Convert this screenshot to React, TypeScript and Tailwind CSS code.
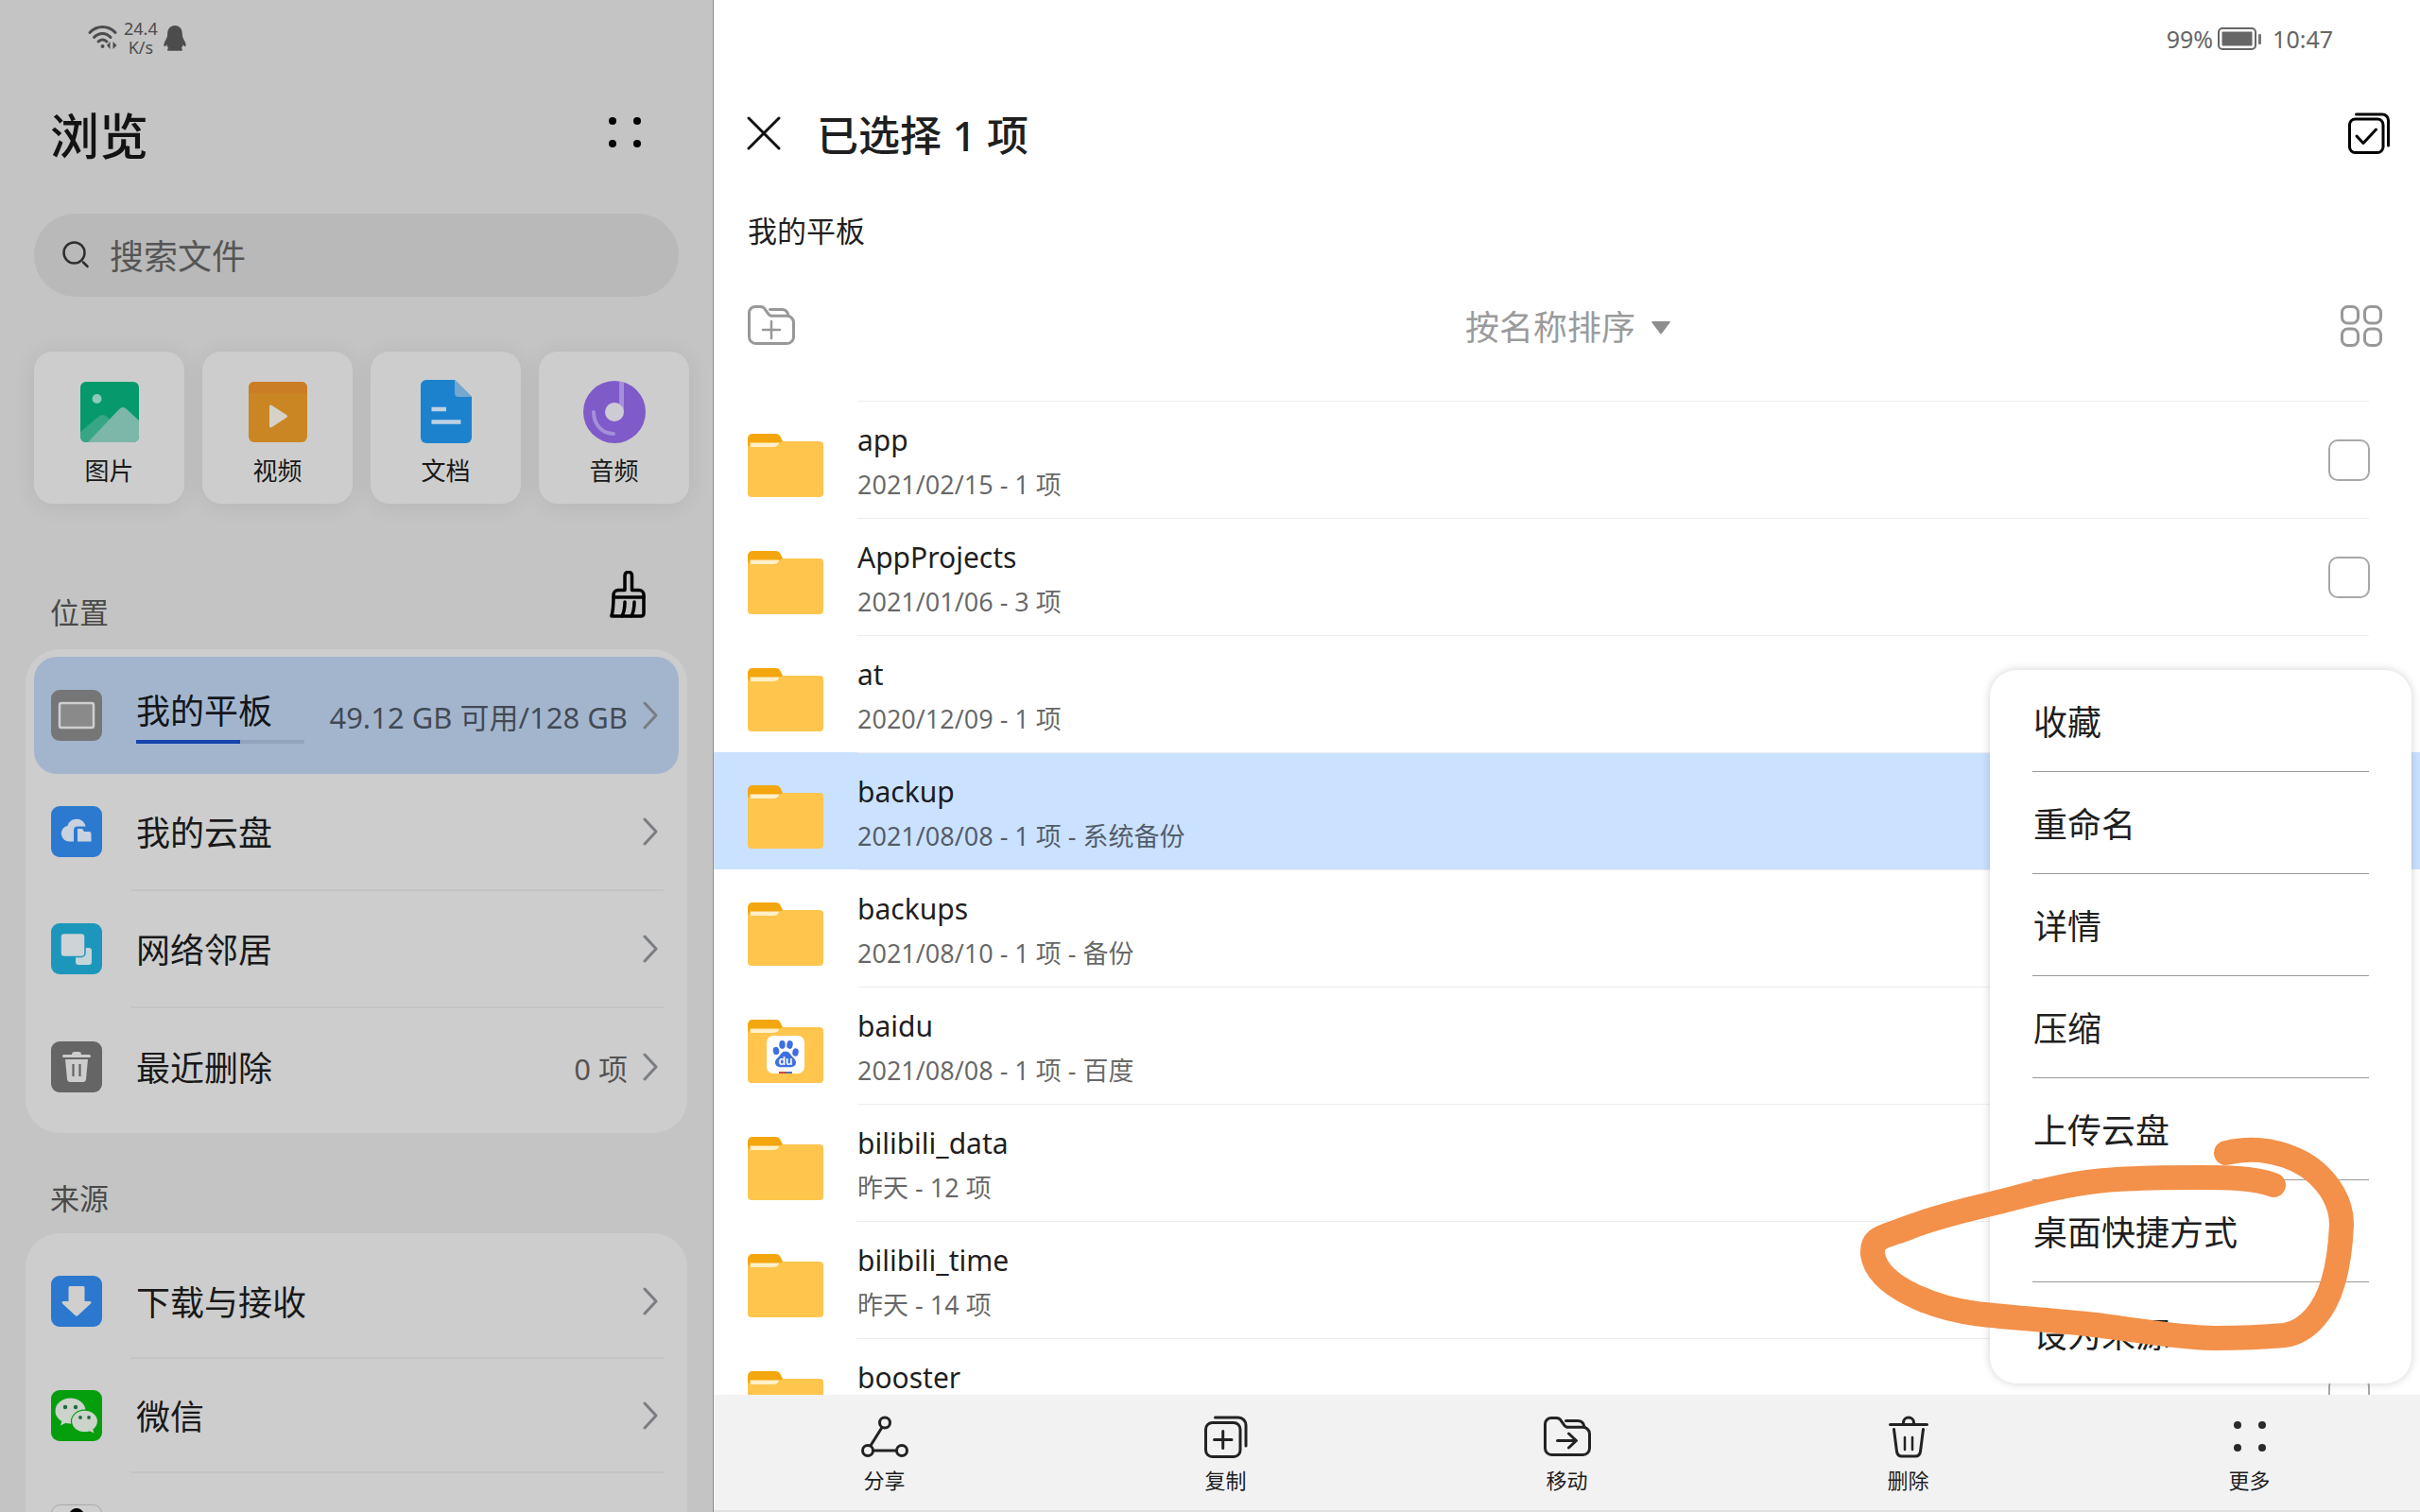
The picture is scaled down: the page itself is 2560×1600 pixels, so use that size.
import React from "react";

type IconProps = { className?: string };

function WifiIcon() {
  return (
    <svg width="32" height="28" viewBox="0 0 32 28" fill="none" stroke="#4c4c4c" strokeWidth="3" strokeLinecap="round" aria-hidden="true">
      <path d="M2 8.5C9.5 0.5 21.500 0.5 29 8.500" />
      <path d="M6.500 13.500C11.500 8 19.500 8 24 13.500" />
      <path d="M11 18C13.500 15.300 17.500 15.300 20 18" />
      <circle cx="15.500" cy="23" r="2" fill="#4c4c4c" stroke="none" />
      <path d="M23.500 18v8L20 22zM26.500 18v8l4-4z" fill="#4c4c4c" stroke="none" />
    </svg>
  );
}

function PenguinIcon() {
  return (
    <svg width="24" height="27" viewBox="0 0 24 27" fill="#4c4c4c" aria-hidden="true">
      <path d="M12 0C7 0 4.200 3.800 4.200 8.500c0 3-.6 4.500-2 7C.6 18.300-.2 21 .8 22c.7.6 1.800-.6 2.500-1.700.3 1.500.9 2.700 1.900 3.700-1.200.6-1.700 2.500 0 2.800h13.600c1.700-.3 1.200-2.200 0-2.800 1-1 1.600-2.200 1.900-3.700.7 1.100 1.800 2.300 2.500 1.700 1-1 .2-3.700-1.400-6.500-1.400-2.500-2-4-2-7C19.800 3.800 17 0 12 0z" />
    </svg>
  );
}

function BatteryIcon() {
  return (
    <svg width="47" height="24" viewBox="0 0 47 24" fill="none" aria-hidden="true">
      <rect x="1" y="1" width="39" height="22" rx="4" stroke="#666" strokeWidth="2" />
      <rect x="4.500" y="4.500" width="32" height="15" rx="1" fill="#666" />
      <rect x="43" y="7" width="3" height="11" rx="1" fill="#777" />
    </svg>
  );
}

function DotsIcon({ className = "" }: IconProps) {
  return (
    <svg width="36" height="34" viewBox="0 0 36 34" fill="currentColor" className={className} aria-hidden="true">
      <circle cx="5" cy="5" r="4" />
      <circle cx="31" cy="5" r="4" />
      <circle cx="5" cy="29" r="4" />
      <circle cx="31" cy="29" r="4" />
    </svg>
  );
}

function SearchIcon() {
  return (
    <svg width="30" height="30" viewBox="0 0 30 30" fill="none" stroke="#2e2e2e" strokeWidth="2.500" strokeLinecap="round" aria-hidden="true">
      <circle cx="12.500" cy="12.500" r="11" />
      <path d="M22 22.500l4.500 4.500" />
    </svg>
  );
}

function BroomIcon() {
  return (
    <svg width="38" height="50" viewBox="0 0 38 50" fill="none" stroke="#000" strokeWidth="3.500" strokeLinecap="round" strokeLinejoin="round" aria-hidden="true">
      <path d="M16 20.500V5a3.700 3.700 0 0 1 7.500 0v15.500H31a5 5 0 0 1 5 5V45q0 3-3 3H1.800C4 42 4 36 4 25.500a5 5 0 0 1 5-5z" />
      <path d="M4 28h32" />
      <path d="M16 33c0 6-1 11-3 15M26 33c0 6-1 11-3 15" />
    </svg>
  );
}

function ChevronIcon() {
  return (
    <svg width="16" height="30" viewBox="0 0 16 30" fill="none" stroke="#7a7d81" strokeWidth="3" strokeLinecap="round" strokeLinejoin="round" className="shrink-0" aria-hidden="true">
      <path d="M2 2l12 13L2 28" />
    </svg>
  );
}

function PictureTile() {
  return (
    <svg width="66" height="68" viewBox="0 0 66 68" aria-hidden="true">
      <defs>
        <clipPath id="pic"><rect x="2" y="2" width="62" height="64" rx="6" /></clipPath>
      </defs>
      <g clipPath="url(#pic)">
        <rect x="2" y="2" width="62" height="64" fill="#05996c" />
        <circle cx="19.500" cy="20" r="5" fill="#8ccbb7" />
        <path d="M2 55L21 39q5-4 9 0l12 10v17H2z" fill="#37a684" />
        <path d="M10 66L43 31q4-4 8 0l13 12v23z" fill="#7cb7a9" />
      </g>
    </svg>
  );
}

function VideoTile() {
  return (
    <svg width="66" height="68" viewBox="0 0 66 68" aria-hidden="true">
      <rect x="2" y="2" width="62" height="64" rx="6" fill="#ca8623" />
      <path d="M2 14V8a6 6 0 0 1 6-6h50a6 6 0 0 1 6 6v6z" fill="#cb7d25" />
      <path d="M24 28.500q0-3 2.600-1.500L42 37q2.200 1.500 0 3L26.600 50Q24 51.500 24 48.500z" fill="#d6d2c8" />
    </svg>
  );
}

function DocTile() {
  return (
    <svg width="66" height="68" viewBox="0 0 66 68" aria-hidden="true">
      <path d="M6 6a6 6 0 0 1 6-6h30l18 18v43a6 6 0 0 1-6 6H12a6 6 0 0 1-6-6z" fill="#1d82ce" />
      <path d="M42 0l18 18H46a4 4 0 0 1-4-4z" fill="#74a8cf" />
      <path d="M17.500 31h15.500M17.500 44.500h31" stroke="#bed2e3" strokeWidth="4.500" />
    </svg>
  );
}

function AudioTile() {
  return (
    <svg width="66" height="68" viewBox="0 0 66 68" aria-hidden="true">
      <circle cx="33" cy="34" r="33" fill="#7f5ac9" />
      <path d="M38 1.500q2.500.5 5 1.200V34h-5z" fill="#a48fd9" />
      <circle cx="33" cy="34" r="10" fill="#cdcbd4" />
      <path d="M11 34c0 13 9 23 21 23" fill="none" stroke="#a48fd9" strokeWidth="4" strokeLinecap="round" />
    </svg>
  );
}

function TabletIcon() {
  return (
    <svg width="54" height="54" viewBox="0 0 54 54" aria-hidden="true">
      <rect width="54" height="54" rx="9" fill="#767676" />
      <rect x="9" y="14" width="36" height="26" rx="2" fill="#8a8a8a" stroke="#cfcfcf" strokeWidth="2.500" />
    </svg>
  );
}

function CloudIcon() {
  return (
    <svg width="54" height="54" viewBox="0 0 54 54" aria-hidden="true">
      <rect width="54" height="54" rx="9" fill="#2b7ad0" />
      <path d="M24 37.500h-4.500a8.500 8.500 0 0 1-2-16.800A10 10 0 0 1 36 19.500l.5 2H28a4 4 0 0 0-4 4z" fill="#c8d3df" />
      <path d="M28 24h5l2 3h5q2.500 0 2.500 2.500V37.500H28z" fill="#c8d3df" />
    </svg>
  );
}

function NetworkIcon() {
  return (
    <svg width="54" height="54" viewBox="0 0 54 54" aria-hidden="true">
      <rect width="54" height="54" rx="9" fill="#1c97bb" />
      <rect x="26" y="26" width="17" height="18" rx="3" fill="#c3d4da" />
      <rect x="10" y="10.500" width="26" height="25" rx="4" fill="#cdd3d6" stroke="#1c97bb" strokeWidth="1.500" />
    </svg>
  );
}

function TrashTileIcon() {
  return (
    <svg width="54" height="54" viewBox="0 0 54 54" aria-hidden="true">
      <rect width="54" height="54" rx="9" fill="#656565" />
      <path d="M22 14q0-3 3-3h4q3 0 3 3h8.500q1.500 0 1.500 1.500t-1.500 1.500h-27q-1.500 0-1.500-1.500t1.500-1.500z" fill="#cdcdcd" />
      <path d="M15 19h24l-2 21q-.3 3-3.300 3H20.300q-3 0-3.300-3z" fill="#cdcdcd" />
      <path d="M23.500 24v13M30.500 24v13" stroke="#656565" strokeWidth="2.200" />
    </svg>
  );
}

function DownloadIcon() {
  return (
    <svg width="54" height="54" viewBox="0 0 54 54" aria-hidden="true">
      <rect width="54" height="54" rx="9" fill="#2c78cf" />
      <path d="M20 11h14q1.500 0 1.500 1.500V27H41q2.500.3.900 2.400L28.500 42q-1.500 1.200-3 0L12.100 29.400Q10.500 27.300 13 27h5.500V12.500Q18.500 11 20 11z" fill="#cfcfcd" />
    </svg>
  );
}

function WechatIcon() {
  return (
    <svg width="54" height="54" viewBox="0 0 54 54" aria-hidden="true">
      <rect width="54" height="54" rx="9" fill="#059e0c" />
      <ellipse cx="20.500" cy="22" rx="16" ry="13.500" fill="#cbd3cb" />
      <path d="M12 31l-2 6.500 8-4z" fill="#cbd3cb" />
      <ellipse cx="35.500" cy="33" rx="14" ry="11.800" fill="#cbd3cb" stroke="#059e0c" strokeWidth="1.200" />
      <path d="M39 42.500l6.500 3-2-6z" fill="#cbd3cb" />
      <g fill="#1d6a3f">
        <circle cx="15" cy="18" r="2.200" />
        <circle cx="26" cy="18" r="2.200" />
        <circle cx="31" cy="29" r="1.900" />
        <circle cx="40" cy="29" r="1.900" />
      </g>
    </svg>
  );
}

function QQIcon() {
  return (
    <svg width="54" height="54" viewBox="0 0 54 54" aria-hidden="true">
      <rect x=".5" y=".5" width="53" height="53" rx="9" fill="#cfcfcf" stroke="#a8a8a8" />
      <ellipse cx="27" cy="21" rx="11" ry="17" fill="#000" />
      <ellipse cx="27" cy="34" rx="14" ry="13" fill="#000" />
      <ellipse cx="27" cy="37" rx="9" ry="9" fill="#fff" />
    </svg>
  );
}

function FolderIcon({ branded = false }: { branded?: boolean }) {
  return (
    <svg width="80" height="68" viewBox="0 0 80 68" className="shrink-0" aria-hidden="true">
      <path d="M0 5a5 5 0 0 1 5-5h24.500q3.500 0 5 3l3 6v8H0z" fill="#f3a60d" />
      <path d="M2.500 9.500H34l-3 5H2.500z" fill="#fff0c8" />
      <path d="M0 10.500Q1 14 4 14h24q3 0 5-3t5-3h38a4 4 0 0 1 4 4v51a4 4 0 0 1-4 4H4a4 4 0 0 1-4-4z" fill="#ffc54d" />
      {branded && (
        <g>
          <rect x="20" y="17" width="40" height="40" rx="7" fill="#fff" />
          <g fill="#3e6fe0">
            <ellipse cx="30" cy="33" rx="3.200" ry="4.200" transform="rotate(-12 30 33)" />
            <ellipse cx="36.500" cy="26.500" rx="3.200" ry="4.400" />
            <ellipse cx="44.500" cy="26.500" rx="3.200" ry="4.400" transform="rotate(8 44.500 26.500)" />
            <ellipse cx="50.500" cy="34.500" rx="3.200" ry="4.200" transform="rotate(12 50.500 34.500)" />
            <path d="M40 33.500c4 0 5 3.500 7.500 6s4.500 4.500 3 8c-1.500 3.200-5 2.800-10.500 2.800s-9 .4-10.500-2.800c-1.500-3.500.5-5.500 3-8s3.500-6 7.500-6z" />
          </g>
          <text x="40" y="48" textAnchor="middle" fontFamily="Inter, sans-serif" fontSize="12" fontWeight="600" fill="#fff">du</text>
          <rect x="33" y="55" width="7" height="2" fill="#d0434d" />
          <rect x="40" y="55" width="7" height="2" fill="#5a6fb0" />
        </g>
      )}
    </svg>
  );
}

function CloseIcon() {
  return (
    <svg width="36" height="36" viewBox="0 0 36 36" stroke="#111" strokeWidth="3" strokeLinecap="round" aria-hidden="true">
      <path d="M2 2l32 32M34 2L2 34" />
    </svg>
  );
}

function SelectAllIcon() {
  return (
    <svg width="44" height="44" viewBox="0 0 44 44" fill="none" stroke="#000" strokeWidth="3" strokeLinecap="round" strokeLinejoin="round" aria-hidden="true">
      <rect x="1.500" y="7" width="35.500" height="35.500" rx="6" />
      <path d="M8.500 2H36a6.500 6.500 0 0 1 6.500 6.500V35" />
      <path d="M9 25l7 7.500L29.500 18" />
    </svg>
  );
}

function FolderOutline({ children, className = "" }: { children: React.ReactNode; className?: string }) {
  return (
    <svg width="50" height="42" viewBox="0 0 50 42" fill="none" stroke="currentColor" strokeWidth="3" strokeLinecap="round" strokeLinejoin="round" className={className} aria-hidden="true">
      <path d="M1.500 8A6.500 6.500 0 0 1 8 1.500h5.500q3 0 4.500 2.300l3.500 5q1.700 2.500 4.500 2.500h15A7 7 0 0 1 48.500 18v15.500a7 7 0 0 1-7 7h-33a7 7 0 0 1-7-7z" />
      <path d="M23.500 4.500H36q6 0 7 6.500" />
      {children}
    </svg>
  );
}

function GridIcon() {
  return (
    <svg width="44" height="44" viewBox="0 0 44 44" fill="none" stroke="#989898" strokeWidth="3" aria-hidden="true">
      <rect x="1.500" y="1.500" width="17" height="17.500" rx="6" />
      <rect x="25.500" y="1.500" width="17" height="17.500" rx="6" />
      <rect x="1.500" y="25" width="17" height="17.500" rx="6" />
      <rect x="25.500" y="25" width="17" height="17.500" rx="6" />
    </svg>
  );
}

function ShareIcon() {
  return (
    <svg width="50" height="44" viewBox="0 0 50 44" fill="none" stroke="#222" strokeWidth="3" aria-hidden="true">
      <circle cx="25" cy="7.500" r="5.500" />
      <circle cx="7" cy="37" r="5.500" />
      <circle cx="43" cy="37" r="5.500" />
      <path d="M22 12.500L9.800 32M12.500 37h25" />
    </svg>
  );
}

function CopyIcon() {
  return (
    <svg width="46" height="45" viewBox="0 0 46 45" fill="none" stroke="#222" strokeWidth="3" strokeLinecap="round" aria-hidden="true">
      <rect x="1.500" y="7.500" width="36.500" height="36" rx="7" />
      <path d="M11.500 2H36a8 8 0 0 1 8 8v22" />
      <path d="M19.700 16.500v18M10.500 25.500H29" />
    </svg>
  );
}

function TrashIcon() {
  return (
    <svg width="42" height="45" viewBox="0 0 42 45" fill="none" stroke="#222" strokeWidth="3" strokeLinecap="round" strokeLinejoin="round" aria-hidden="true">
      <path d="M1.500 9.500h39M15.500 9v-1.500a5.500 5.500 0 0 1 11 0V9" />
      <path d="M5.500 14.500L8.500 38q.7 5 5.500 5h14q4.800 0 5.500-5l3-23.500" />
      <path d="M17 23v13M25 23v13" strokeWidth="2.500" />
    </svg>
  );
}

const categories = [
  { label: "图片", icon: <PictureTile /> },
  { label: "视频", icon: <VideoTile /> },
  { label: "文档", icon: <DocTile /> },
  { label: "音频", icon: <AudioTile /> },
];

const files: { name: string; info?: string; selected?: boolean; branded?: boolean }[] = [
  { name: "app", info: "2021/02/15 - 1 项" },
  { name: "AppProjects", info: "2021/01/06 - 3 项" },
  { name: "at", info: "2020/12/09 - 1 项" },
  { name: "backup", info: "2021/08/08 - 1 项 - 系统备份", selected: true },
  { name: "backups", info: "2021/08/10 - 1 项 - 备份" },
  { name: "baidu", info: "2021/08/08 - 1 项 - 百度", branded: true },
  { name: "bilibili_data", info: "昨天 - 12 项" },
  { name: "bilibili_time", info: "昨天 - 14 项" },
  { name: "booster" },
];

const menuItems = ["收藏", "重命名", "详情", "压缩", "上传云盘", "桌面快捷方式", "设为来源"];

const actions = [
  { label: "分享", icon: <ShareIcon /> },
  { label: "复制", icon: <CopyIcon /> },
  {
    label: "移动",
    icon: (
      <FolderOutline className="text-[#222]">
        <path d="M14.500 25.500H33M26.500 18l8 7.500-8 7.500" />
      </FolderOutline>
    ),
  },
  { label: "删除", icon: <TrashIcon /> },
  { label: "更多", icon: <DotsIcon className="text-[#2a2a2a]" /> },
];

function RowDivider() {
  return <div className="mr-4 ml-[102px] h-0.5 bg-[#c4c4c4]" />;
}

type PlaceProps = {
  icon: React.ReactNode;
  label?: string;
  value?: string;
  used?: number;
  divider?: boolean;
};

function Place({ icon, label, value, used, divider = true }: PlaceProps) {
  const active = used !== undefined;
  return (
    <li className="flex h-[124px] flex-col">
      <button
        type="button"
        className={
          active
            ? "flex w-full flex-1 items-center rounded-3xl bg-[#a3b5cd] pr-[22px] pl-[18px] text-left"
            : "flex w-full flex-1 items-center rounded-3xl pr-[22px] pl-[18px] text-left"
        }
      >
        {icon}
        <span className="ml-9 flex flex-col gap-2 pt-1">
          <span className="text-[36px] leading-[44px] text-black/90">{label}</span>
          {active && (
            <span role="progressbar" aria-label="已用空间" aria-valuenow={used} className="block h-1 w-[178px] bg-[#93a3ba]">
              <span className="block h-full bg-[#1444ae]" style={{ width: `${used}%` }} />
            </span>
          )}
        </span>
        <span className="ml-auto pt-1 pr-4 text-[31px] leading-[44px] whitespace-nowrap text-black/60">{value}</span>
        <ChevronIcon />
      </button>
      {divider && !active && <RowDivider />}
    </li>
  );
}

function Source({ icon, label, name }: { icon: React.ReactNode; label?: string; name: string }) {
  return (
    <li className="flex h-[121px] flex-col">
      <button type="button" aria-label={name} className="flex w-full flex-1 items-center pr-[22px] pl-[18px] text-left">
        {icon}
        <span className="ml-9 flex-1 pt-1 text-[36px] leading-[44px] text-black/90">{label}</span>
        <ChevronIcon />
      </button>
      <RowDivider />
    </li>
  );
}

function Sidebar() {
  return (
    <aside className="flex flex-col overflow-hidden border-r border-[#8c8c8c] bg-[#c4c4c4] pr-[27px] pl-[27px]">
      <div className="flex h-[82px] shrink-0 items-start gap-1.5 pt-5 pl-[66px] text-[18px] leading-5 text-[#4c4c4c]">
        <div className="pt-1.5"><WifiIcon /></div>
        <div className="text-center">
          <div>24.4</div>
          <div>K/s</div>
        </div>
        <div className="pt-[7px]"><PenguinIcon /></div>
      </div>

      <header className="flex h-[124px] shrink-0 items-center justify-between pr-12 pl-[26px]">
        <h1 className="text-[52px] leading-[60px] font-medium text-black/90">浏览</h1>
        <button type="button" aria-label="更多选项" className="pb-2 text-black"><DotsIcon /></button>
      </header>

      <label className="mx-[9px] mt-5 flex h-[88px] shrink-0 items-center gap-5 rounded-full bg-[#b9b9b9] pl-[30px]">
        <SearchIcon />
        <input
          type="search"
          aria-label="搜索文件"
          placeholder="搜索文件"
          className="min-w-0 flex-1 bg-transparent pt-1 text-[36px] leading-[44px] outline-none placeholder:text-[#555]"
        />
      </label>

      <div className="-mr-0.5 mt-[58px] grid shrink-0 grid-cols-4 gap-[19px] pl-[9px]">
        {categories.map((c) => (
          <button
            key={c.label}
            type="button"
            className="flex h-[161px] flex-col items-center gap-2.5 rounded-[20px] bg-[#cdcdcd] pt-[30px] text-[26px] leading-9 text-black/90 shadow-[0_2px_24px_rgba(0,0,0,0.08)]"
          >
            {c.icon}
            {c.label}
          </button>
        ))}
      </div>

      <div className="flex h-[154px] shrink-0 items-end justify-between pr-[44px] pb-[21px] pl-[26px]">
        <h2 className="text-[31px] leading-9 text-black/65">位置</h2>
        <button type="button" aria-label="清理" className="pb-3"><BroomIcon /></button>
      </div>
      <ul className="shrink-0 rounded-[36px] bg-[#cdcdcd] px-[9px] py-2">
        <Place icon={<TabletIcon />} label="我的平板" value="49.12 GB 可用/128 GB" used={62} />
        <Place icon={<CloudIcon />} label="我的云盘" />
        <Place icon={<NetworkIcon />} label="网络邻居" />
        <Place icon={<TrashTileIcon />} label="最近删除" value="0 项" divider={false} />
      </ul>

      <div className="flex h-[106px] shrink-0 items-end pb-[19px] pl-[26px]">
        <h2 className="text-[31px] leading-9 text-black/65">来源</h2>
      </div>
      <ul className="shrink-0 rounded-[36px] bg-[#cdcdcd] px-[9px] pt-3">
        <Source icon={<DownloadIcon />} name="下载与接收" label="下载与接收" />
        <Source icon={<WechatIcon />} name="微信" label="微信" />
        <Source icon={<QQIcon />} name="QQ" />
      </ul>
    </aside>
  );
}

function HandDrawnLoop() {
  return (
    <svg
      className="pointer-events-none absolute right-[61px] bottom-6"
      width="530"
      height="240"
      viewBox="1960 1200 530 240"
      fill="none"
      aria-hidden="true"
    >
      <path
        d="M2355 1220C2375 1215 2398 1216 2418 1223C2452 1234 2477 1264 2477 1296C2476 1319 2474 1337 2468 1357C2460 1385 2442 1409 2417 1413C2394 1415 2368 1416 2343 1416C2300 1415 2256 1407 2217 1402C2174 1397 2130 1395 2090 1390C2050 1385 1986 1363 1981 1327C1980 1309 1990 1310 2019 1299C2054 1285 2092 1278 2130 1268C2160 1260 2190 1253 2217 1250C2254 1246 2290 1246 2327 1246C2352 1246 2385 1246 2405 1254"
        stroke="#f39049"
        strokeWidth="26"
        strokeLinecap="round"
        strokeLinejoin="round"
      />
    </svg>
  );
}

function MoreMenu() {
  return (
    <div className="absolute right-[9px] bottom-[136px]">
      <ul role="menu" className="w-[446px] rounded-[28px] bg-white px-[45px] shadow-[0_0_10px_rgba(0,0,0,0.18)]">
        {menuItems.map((item) => (
          <li key={item} role="none" className="border-b border-[#999] last:border-b-0">
            <button type="button" role="menuitem" className="flex h-[107px] w-full items-center px-px pt-1 text-[36px] leading-[44px] text-black/90">
              {item}
            </button>
          </li>
        ))}
      </ul>
      <HandDrawnLoop />
    </div>
  );
}

function Browser() {
  return (
    <main className="relative flex min-w-0 flex-col overflow-hidden bg-white">
      <div className="flex h-[82px] shrink-0 items-center justify-end gap-[5px] pr-[92px] text-[25px] leading-8 text-[#666]">
        <span>99%</span>
        <BatteryIcon />
        <span className="pl-1.5">10:47</span>
      </div>

      <header className="flex h-[118px] shrink-0 items-center pr-8 pl-[35px]">
        <button type="button" aria-label="关闭"><CloseIcon /></button>
        <h1 className="pt-1 pl-[38px] text-[44px] leading-[52px] font-medium text-black/90">已选择 1 项</h1>
        <button type="button" aria-label="全选" className="ml-auto"><SelectAllIcon /></button>
      </header>

      <nav className="flex h-[88px] shrink-0 items-center pl-9 text-[31px] leading-9 text-black/90">
        <a href="#tablet">我的平板</a>
      </nav>

      <div className="flex h-[136px] shrink-0 items-start justify-between pt-[35px] pr-10 pl-9">
        <button type="button" aria-label="新建文件夹" className="text-[#989898]">
          <FolderOutline>
            <path d="M25 17v18M16 26h18" strokeWidth="2.500" />
          </FolderOutline>
        </button>
        <label className="flex items-center gap-4 pt-0.5">
          <select aria-label="排序方式" className="appearance-none bg-transparent text-[36px] leading-[44px] text-[#9b9b9b] outline-none">
            <option>按名称排序</option>
          </select>
          <svg width="20" height="14" viewBox="0 0 20 14" fill="#8e8e8e" aria-hidden="true">
            <path d="M1 0h18q1.500 0 .6 1.200L10.800 13q-.8 1-1.600 0L.4 1.200Q-.5 0 1 0z" />
          </svg>
        </label>
        <button type="button" aria-label="网格视图"><GridIcon /></button>
      </div>

      <ul className="min-h-0 flex-1 overflow-hidden">
        {files.map((f) => (
          <li key={f.name}>
            <label className={f.selected ? "flex h-[124px] items-center bg-[#cae1ff] pl-9" : "flex h-[124px] items-center pl-9"}>
              <span className="pt-3.5"><FolderIcon branded={f.branded} /></span>
              <span className="mr-[54px] ml-9 flex h-full flex-1 items-center border-t border-[#ededed]">
                <span className="flex flex-1 flex-col gap-1.5 pt-1">
                  <span className="text-[30px] leading-[42px] text-black/90">{f.name}</span>
                  <span className="min-h-10 text-[27px] leading-10 text-black/60">{f.info}</span>
                </span>
                <input
                  type="checkbox"
                  defaultChecked={f.selected}
                  className="-mr-px size-11 appearance-none rounded-[10px] border-2 border-[#a8a8a8] checked:border-[#0a59f7] checked:bg-[#0a59f7]"
                />
              </span>
            </label>
          </li>
        ))}
      </ul>

      <div role="toolbar" aria-label="文件操作" className="grid h-[124px] shrink-0 grid-cols-5 border-b-2 border-[#e0e0e0] bg-[#f2f2f2]">
        {actions.map((a) => (
          <button key={a.label} type="button" className="flex flex-col items-center pt-[22px] text-[22px] leading-8 text-black/90">
            <span className="flex h-[52px] items-start justify-center">
              <span className="flex h-11 items-center">{a.icon}</span>
            </span>
            {a.label}
          </button>
        ))}
      </div>

      <MoreMenu />
    </main>
  );
}

export default function App() {
  return (
    <div
      lang="zh-CN"
      className="grid h-screen grid-cols-[755px_minmax(0,1fr)] overflow-hidden bg-white font-['Noto_Sans','Noto_Sans_CJK_SC',sans-serif]"
    >
      <Sidebar />
      <Browser />
    </div>
  );
}
